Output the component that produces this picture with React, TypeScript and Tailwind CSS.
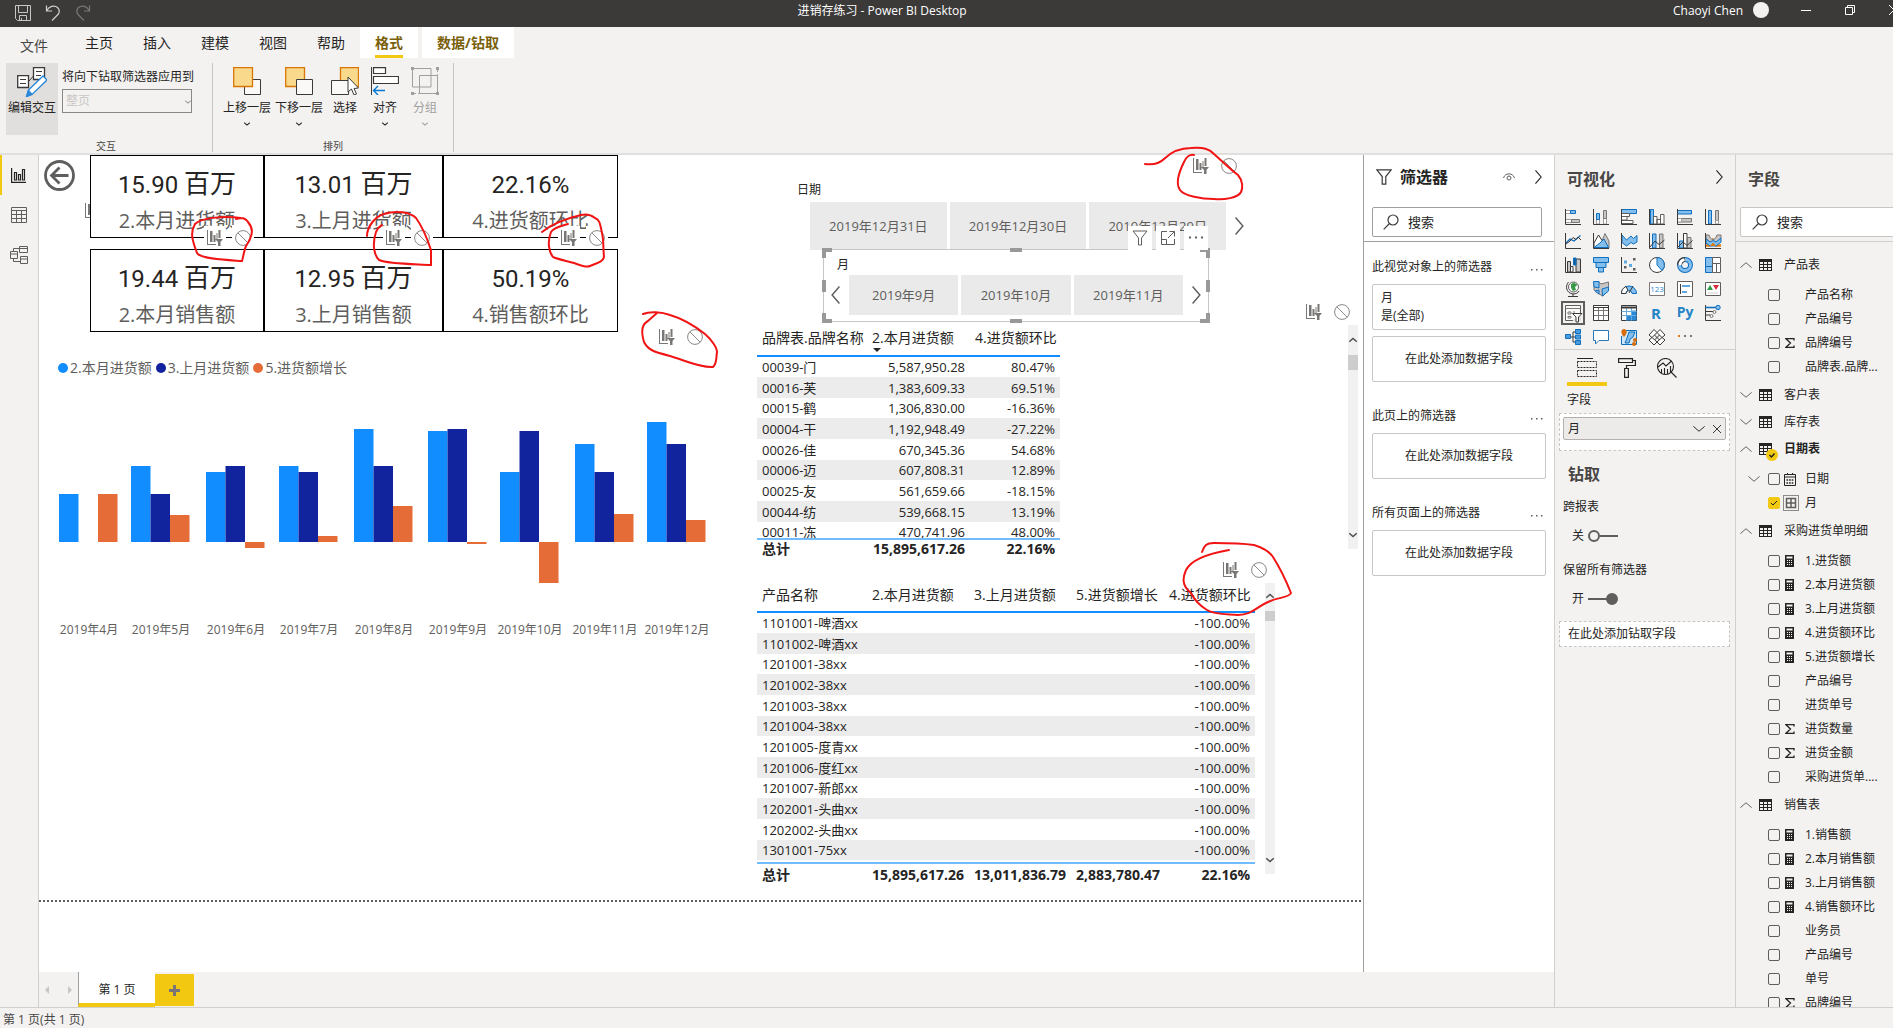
import type { ReactNode } from "react";

const DARK = "#3b3a39";
const GRAY = "#a19f9d";
const BLUE = "#83beec";
const EDGE = "#106ebe";

const menuTabs = ["主页", "插入", "建模", "视图", "帮助"];

const cardRows = [
  [
    { value: "15.90", unit: "百万", label: "2.本月进货额" },
    { value: "13.01", unit: "百万", label: "3.上月进货额" },
    { value: "22.16%", unit: "", label: "4.进货额环比" },
  ],
  [
    { value: "19.44", unit: "百万", label: "2.本月销售额" },
    { value: "12.95", unit: "百万", label: "3.上月销售额" },
    { value: "50.19%", unit: "", label: "4.销售额环比" },
  ],
];

// [label, x, this month, last month, growth]
const months: [string, number, number, number, number][] = [
  ["2019年4月", 20, 48, 0, 48],
  ["2019年5月", 92, 76, 48, 27],
  ["2019年6月", 167, 70, 76, -6],
  ["2019年7月", 240, 76, 70, 6],
  ["2019年8月", 315, 113, 76, 36],
  ["2019年9月", 389, 111, 113, -2],
  ["2019年10月", 461, 70, 111, -41],
  ["2019年11月", 536, 98, 70, 28],
  ["2019年12月", 608, 120, 98, 22],
];

const brandRows = [
  ["00039-门", "5,587,950.28", "80.47%"],
  ["00016-芙", "1,383,609.33", "69.51%"],
  ["00015-鹤", "1,306,830.00", "-16.36%"],
  ["00004-干", "1,192,948.49", "-27.22%"],
  ["00026-佳", "670,345.36", "54.68%"],
  ["00006-迈", "607,808.31", "12.89%"],
  ["00025-友", "561,659.66", "-18.15%"],
  ["00044-纺", "539,668.15", "13.19%"],
  ["00011-冻", "470,741.96", "48.00%"],
];

const productRows = [
  "1101001-啤酒xx",
  "1101002-啤酒xx",
  "1201001-38xx",
  "1201002-38xx",
  "1201003-38xx",
  "1201004-38xx",
  "1201005-度青xx",
  "1201006-度红xx",
  "1201007-新郎xx",
  "1202001-头曲xx",
  "1202002-头曲xx",
  "1301001-75xx",
].map((name) => [name, "", "", "", "-100.00%"]);

type Field = { name: string; kind?: "sum" | "calc" | "date" | "column"; checked?: boolean };

const tables: { name: string; open: boolean; active?: boolean; fields: Field[] }[] = [
  {
    name: "产品表",
    open: true,
    fields: [{ name: "产品名称" }, { name: "产品编号" }, { name: "品牌编号", kind: "sum" }, { name: "品牌表.品牌..." }],
  },
  { name: "客户表", open: false, fields: [] },
  { name: "库存表", open: false, fields: [] },
  {
    name: "日期表",
    open: true,
    active: true,
    fields: [
      { name: "日期", kind: "date" },
      { name: "月", kind: "column", checked: true },
    ],
  },
  {
    name: "采购进货单明细",
    open: true,
    fields: [
      { name: "1.进货额", kind: "calc" },
      { name: "2.本月进货额", kind: "calc" },
      { name: "3.上月进货额", kind: "calc" },
      { name: "4.进货额环比", kind: "calc" },
      { name: "5.进货额增长", kind: "calc" },
      { name: "产品编号" },
      { name: "进货单号" },
      { name: "进货数量", kind: "sum" },
      { name: "进货金额", kind: "sum" },
      { name: "采购进货单...." },
    ],
  },
  {
    name: "销售表",
    open: true,
    fields: [
      { name: "1.销售额", kind: "calc" },
      { name: "2.本月销售额", kind: "calc" },
      { name: "3.上月销售额", kind: "calc" },
      { name: "4.销售额环比", kind: "calc" },
      { name: "业务员" },
      { name: "产品编号" },
      { name: "单号" },
      { name: "品牌编号", kind: "sum" },
    ],
  },
];

type ChevronProps = { dir: "up" | "down" | "left" | "right"; className: string };

function Chevron({ dir, className }: ChevronProps) {
  const paths = {
    up: "M.5 7.5 L8 1 L15.5 7.5",
    down: "M.5 .5 L8 7 L15.5 .5",
    left: "M7.5 .5 L1 8 L7.5 15.5",
    right: "M.5 .5 L7 8 L.5 15.5",
  };
  const flat = dir === "up" || dir === "down";
  return (
    <svg viewBox={flat ? "0 0 16 8" : "0 0 8 16"} className={className} fill="none" stroke="currentColor" strokeWidth="1.3">
      <path d={paths[dir]} />
    </svg>
  );
}

/* ---------- title bar and ribbon ---------- */

function TitleBar() {
  return (
    <header className="flex h-[27px] shrink-0 items-start overflow-hidden bg-[#3b3a39] pt-[3px] text-white">
      <div className="flex flex-1 items-center gap-[14px] pt-[2px] pl-[15px]">
        <button aria-label="保存">
          <svg viewBox="0 0 16 16" className="size-[16px]" fill="none" stroke="#c8c6c4" strokeWidth="1">
            <path d="M.5 .5 H15.5 V15.5 H2.5 L.5 13.5 Z M3.5 .5 V7.5 H12.5 V.5 M4.5 15.5 V10.5 H11.5 V15.5 M6.5 13 V15.5" />
          </svg>
        </button>
        <button aria-label="撤消">
          <svg viewBox="0 0 16 16" className="size-[16px]" fill="none" stroke="#d2d0ce" strokeWidth="1.2">
            <path d="M1.5 .5 V6 H7 M1.5 6 C4 1.5 9 -.5 12.5 2.5 C15 5 14.5 8 12 10.5 L7 15.5" />
          </svg>
        </button>
        <button aria-label="恢复">
          <svg viewBox="0 0 16 16" className="size-[16px]" fill="none" stroke="#797775" strokeWidth="1.2">
            <path d="M14.5 .5 V6 H9 M14.5 6 C12 1.5 7 -.5 3.5 2.5 C1 5 1.5 8 4 10.5 L9 15.5" />
          </svg>
        </button>
      </div>
      <h1 className="mr-[144px] text-[12px] leading-4">进销存练习 - Power BI Desktop</h1>
      <div className="flex flex-1 items-start justify-end">
        <span className="text-[12px] leading-4">Chaoyi Chen</span>
        <span className="-mt-px ml-[10px] size-[16px] rounded-full bg-[#f3f2f1]" />
        <button aria-label="最小化" className="ml-[32px] pt-[2px]">
          <svg viewBox="0 0 10 10" className="size-[10px]" stroke="#fff">
            <path d="M0 5.5 H10" />
          </svg>
        </button>
        <button aria-label="还原" className="ml-[34px] pt-[2px]">
          <svg viewBox="0 0 10 10" className="size-[10px]" fill="none" stroke="#fff">
            <path d="M.5 2.5 H7.5 V9.5 H.5 Z M2.5 2.5 V.5 H9.5 V7.5 H7.5" />
          </svg>
        </button>
        <button aria-label="关闭" className="-mr-[6px] ml-[34px] pt-[2px]">
          <svg viewBox="0 0 10 10" className="size-[10px]" stroke="#fff">
            <path d="M0 0 L10 10 M10 0 L0 10" />
          </svg>
        </button>
      </div>
    </header>
  );
}

type RibbonButtonProps = { label: string; wide?: boolean; menu?: boolean; disabled?: boolean; children: ReactNode };

function RibbonButton({ label, wide, menu = true, disabled, children }: RibbonButtonProps) {
  return (
    <button
      disabled={disabled}
      className={`flex flex-col items-center pt-1 text-[12px] leading-[14px] whitespace-nowrap ${wide ? "w-[52px]" : "w-[40px]"} ${disabled ? "text-[#a19f9d]" : "text-[#252423]"}`}
    >
      <svg viewBox="0 0 28 28" className="mb-[6px] size-[28px]" fill="none">
        {children}
      </svg>
      {label}
      {menu && <Chevron dir="down" className="mt-[7px] h-[4px] w-[6px] stroke-[3]" />}
    </button>
  );
}

function Ribbon() {
  return (
    <section className="shrink-0 border-b-2 border-[#e1dfdd] bg-[#f3f2f1]">
      <nav className="flex h-[31px] items-center text-[14px] leading-5 text-[#252423]">
        <button className="w-[70px] pt-[7px] pl-5 text-left text-[#484644]">文件</button>
        {menuTabs.map((tab) => (
          <button key={tab} className="w-[58px]">
            {tab}
          </button>
        ))}
        <button className="relative h-full w-[58px] bg-white font-bold text-[#7a5f0b]">
          格式
          <span className="absolute bottom-0 left-[15px] h-[3px] w-[28px] bg-[#f2c811]" />
        </button>
        <button className="ml-1 h-full w-[92px] bg-white font-bold text-[#7a5f0b]">数据/钻取</button>
      </nav>

      <div className="flex h-[95px] pt-[5px] pb-px text-[12px]">
        <div className="flex w-[213px] flex-col border-r border-[#c8c6c4] pl-[6px]">
          <div className="flex h-[72px] shrink-0 gap-1">
            <button className="flex w-[52px] flex-col items-center bg-[#e1dfdd] pt-1 leading-[14px] whitespace-nowrap text-[#252423]">
              <svg viewBox="0 0 30 30" className="mb-1 size-[30px]" fill="none" stroke={DARK}>
                <path fill="#fff" d="M.7 8.7 H11.5 V20.5 H.7 Z M16.5 .7 H27.5 V12.5 H16.5 Z" strokeWidth="1.3" />
                <path d="M3 12.5 H9 M3 16.5 H9 M19 4.5 H25 M19 8.5 H24 M12 14 L16.5 9" />
                <path d="M11.5 23 L26 9 L30 13 L15 27.5 L9.5 29.5 Z" fill="#fff" stroke="#2b88d8" strokeWidth="1.4" />
                <path d="M11.5 23 L15.2 27.3 L9.5 29.5 Z" fill="#2b88d8" stroke="#2b88d8" />
              </svg>
              编辑交互
            </button>
            <div className="flex flex-col gap-1 pt-[6px]">
              <label htmlFor="drill" className="leading-4 text-[#252423]">
                将向下钻取筛选器应用到
              </label>
              <div className="relative">
                <select
                  id="drill"
                  disabled
                  className="h-[24px] w-[130px] appearance-none border border-[#8a8886] bg-[#f3f2f1] pl-[3px] leading-4 text-[#c8c6c4] opacity-100"
                >
                  <option>整页</option>
                </select>
                <Chevron dir="down" className="absolute top-[11px] right-[3px] h-[4px] w-[6px] stroke-[3] text-[#a19f9d]" />
              </div>
            </div>
          </div>
          <p className="pt-[5px] pr-[6px] text-center text-[10px] leading-3 text-[#484644]">交互</p>
        </div>

        <div className="flex w-[241px] flex-col border-r border-[#c8c6c4] px-2">
          <div className="flex h-[72px] shrink-0">
            <RibbonButton label="上移一层" wide>
              <path d="M11.5 12.5 H27.5 V27.5 H11.5 Z" stroke={DARK} fill="#faf9f8" />
              <path d="M.7 .7 H19.5 V19.5 H.7 Z" fill="#f9d98c" stroke="#d97706" strokeWidth="1.3" />
            </RibbonButton>
            <RibbonButton label="下移一层" wide>
              <path d="M.7 .7 H19.5 V19.5 H.7 Z" fill="#f9d98c" stroke="#d97706" strokeWidth="1.3" />
              <path d="M11.5 12.5 H27.5 V27.5 H11.5 Z" stroke={DARK} fill="#faf9f8" />
            </RibbonButton>
            <RibbonButton label="选择" menu={false}>
              <path d="M9.5 .7 H27.5 V19.5 H9.5 Z" fill="#f9d98c" stroke="#d97706" strokeWidth="1.3" />
              <path d="M.5 13.5 H17.5 V27.5 H.5 Z" stroke={DARK} fill="#faf9f8" />
              <path d="M17 10 L17 25 L20.5 22 L23 28 L25.5 27 L23 21.5 L27.5 21 Z" fill="#fff" stroke={DARK} />
            </RibbonButton>
            <RibbonButton label="对齐">
              <path d="M.5 0 V28" stroke={DARK} />
              <path d="M2.5 .7 H14.5 V6.5 H2.5 Z M2.5 9.5 H27.5 V16.5 H2.5 Z" stroke={DARK} strokeWidth="1.2" fill="#fff" />
              <path d="M2.5 23.5 H14 M7 19 L2.5 23.5 L7 28" stroke="#0078d4" strokeWidth="1.4" />
            </RibbonButton>
            <RibbonButton label="分组" disabled>
              <path d="M1.5 1.5 H20 V20 H1.5 Z M8.5 8.5 H26.5 V26.5 H8.5 Z" stroke={GRAY} />
              <path d="M0 0 H3 V3 H0 Z M25 0 H28 V3 H25 Z M0 25 H3 V28 H0 Z M25 25 H28 V28 H25 Z" fill={GRAY} />
              <path d="M26.5 3 V8 M3 26.5 H8" stroke={GRAY} strokeDasharray="2 2" />
            </RibbonButton>
          </div>
          <p className="pt-[5px] text-center text-[10px] leading-3 text-[#484644]">排列</p>
        </div>
      </div>
    </section>
  );
}

function ViewRail() {
  return (
    <nav className="flex w-[39px] shrink-0 flex-col border-r border-[#d2d0ce] bg-[#f3f2f1]">
      <button aria-label="报表" className="flex h-[40px] items-center border-l-2 border-[#f2c811] pl-[9px]">
        <svg viewBox="0 0 15 15" className="size-[15px]" fill="none" stroke="#252423" strokeWidth="1.2">
          <path d="M.6 0 V14.4 H15 M3.5 4.5 H5.5 V12 H3.5 Z M7.5 6.5 H9.5 V12 H7.5 Z M11.5 1.5 H13.5 V12 H11.5 Z" />
        </svg>
      </button>
      <button aria-label="数据" className="flex h-[40px] items-center pl-[11px]">
        <svg viewBox="0 0 16 16" className="size-[16px]" fill="none" stroke="#605e5c">
          <path d="M.5 .5 H15.5 V15.5 H.5 Z M.5 3.5 H15.5 M.5 7.5 H15.5 M.5 11.5 H15.5 M5.5 3.5 V15.5 M10.5 3.5 V15.5" />
        </svg>
      </button>
      <button aria-label="模型" className="flex h-[40px] items-center pl-[10px]">
        <svg viewBox="0 0 18 18" className="size-[18px]" fill="none" stroke="#605e5c">
          <path d="M9.5 .5 H17.5 V6.5 H9.5 Z M.5 5.5 H7.5 V12.5 H.5 Z M10.5 10.5 H17.5 V17.5 H10.5 Z M9.5 2.5 H17.5 M.5 8 H7.5 M10.5 13 H17.5 M3.5 5.5 V2.5 H9.5 M3.5 12.5 V15.5 H10.5" />
        </svg>
      </button>
    </nav>
  );
}

/* ---------- report canvas ---------- */

function FilterChartIcon() {
  return (
    <svg viewBox="0 0 16 16" className="size-[16px]" fill="#797775">
      <path d="M0 0 H1 V14 H9 V15 H0 Z M3 1 H5.5 V12 H3 Z M6.5 5 H8.5 V12 H6.5 Z M9.5 3 H10.5 V9 H9.5 Z M11.5 0 H13.5 V8 H11.5 Z M8 9 H16 L13.5 12 V16 H11 V12 Z" />
    </svg>
  );
}

function NoneIcon() {
  return (
    <svg viewBox="0 0 16 16" className="size-[16px]" fill="none" stroke="#8a8886">
      <circle cx="8" cy="8" r="7.4" />
      <path d="M2.8 2.8 L13.2 13.2" />
    </svg>
  );
}

function Interaction({ place, boxed }: { place: string; boxed?: boolean }) {
  const box = boxed ? "flex h-[23px] w-[22px] items-center justify-center bg-white" : "flex h-[23px] w-[22px] items-center justify-center";
  return (
    <div className={`absolute flex gap-[6px] ${place}`}>
      <button aria-label="筛选器" className={box}>
        <FilterChartIcon />
      </button>
      <button aria-label="无" className={box}>
        <NoneIcon />
      </button>
    </div>
  );
}

function Cards() {
  return (
    <div className="relative z-10 flex flex-col gap-[11px]">
      {cardRows.map((row, i) => (
        <div key={i} className="grid h-[83px] grid-cols-[174px_179px_173px] border border-black bg-white">
          {row.map((card, j) => (
            <div key={card.label} className={`flex flex-col items-center pt-[11px] ${j < 2 ? "border-r-2 border-black" : ""}`}>
              <p className="font-['Roboto','Noto_Sans_CJK_SC',sans-serif] text-[24px] leading-[34px] text-[#252423]">
                {card.value} <span className="text-[26px]">{card.unit}</span>
              </p>
              <p className="mt-1 text-[20px] leading-[30px] text-[#605e5c]">{card.label}</p>
            </div>
          ))}
        </div>
      ))}
    </div>
  );
}

function Legend() {
  const items = [
    { name: "2.本月进货额", dot: "bg-[#118dff]" },
    { name: "3.上月进货额", dot: "bg-[#12239e]" },
    { name: "5.进货额增长", dot: "bg-[#e66c37]" },
  ];
  return (
    <ul className="mt-[28px] ml-[19px] flex gap-1 text-[14px] leading-4 text-[#605e5c]">
      {items.map((item) => (
        <li key={item.name} className="flex items-center gap-[2px]">
          <span className={`size-[10px] rounded-full ${item.dot}`} />
          {item.name}
        </li>
      ))}
    </ul>
  );
}

function Bar({ x, value, fill }: { x: number; value: number; fill: string }) {
  return <rect x={x} y={value > 0 ? 122 - value : 122} width="19.5" height={Math.abs(value)} fill={fill} />;
}

function MonthChart() {
  return (
    <svg viewBox="0 0 700 230" className="mt-[44px] h-[230px] w-[700px]">
      {months.map(([label, x, current, previous, growth]) => (
        <g key={label}>
          <Bar x={x} value={current} fill="#118dff" />
          <Bar x={x + 19.5} value={previous} fill="#12239e" />
          <Bar x={x + 39} value={growth} fill="#e66c37" />
          <text x={x + 30} y="214" textAnchor="middle" fontSize="12" fill="#605e5c">
            {label}
          </text>
        </g>
      ))}
    </svg>
  );
}

function Tile({ children }: { children: string }) {
  return <button className="flex-1 bg-[#eaeaea] pt-[2px] text-[13px] text-[#605e5c]">{children}</button>;
}

function Slicers() {
  return (
    <>
      <p className="mt-[28px] ml-[40px] text-[12px] leading-[14px] text-[#252423]">日期</p>
      <div className="mt-[5px] ml-[53px] flex h-[48px] items-center gap-[9px]">
        <div className="flex h-full w-[416px] gap-[3px]">
          <Tile>2019年12月31日</Tile>
          <Tile>2019年12月30日</Tile>
          <Tile>2019年12月29日</Tile>
        </div>
        <button aria-label="下一个">
          <Chevron dir="right" className="h-[18px] w-[9px] text-[#605e5c]" />
        </button>
      </div>

      <div className="relative z-10 -mt-px ml-[66px] flex h-[73px] w-[386px] flex-col border border-[#c8c6c4] bg-white">
        <p className="mt-2 ml-[13px] text-[12px] leading-[14px] text-[#252423]">月</p>
        <div className="mt-[3px] flex h-[40px] items-center justify-center gap-[9px]">
          <button aria-label="上一个">
            <Chevron dir="left" className="h-[18px] w-[9px] text-[#605e5c]" />
          </button>
          <div className="flex h-full w-[334px] gap-[3px]">
            <Tile>2019年9月</Tile>
            <Tile>2019年10月</Tile>
            <Tile>2019年11月</Tile>
          </div>
          <button aria-label="下一个">
            <Chevron dir="right" className="h-[18px] w-[9px] text-[#605e5c]" />
          </button>
        </div>
        <Handles />
        <div className="absolute right-0 bottom-full flex gap-1">
          <HoverButton label="筛选">
            <path d="M1 1 H15 L9.5 8 V15 H6.5 V8 Z" />
          </HoverButton>
          <HoverButton label="焦点模式">
            <path d="M7 1.5 H1.5 V14.5 H14.5 V9 M9.5 1.5 H14.5 V6.5 M14.5 1.5 L8 8 M1.5 9.5 H6.5 V14.5" />
          </HoverButton>
          <HoverButton label="更多选项">
            <path d="M1 7.5 H3 M7 7.5 H9 M13 7.5 H15" strokeWidth="2" />
          </HoverButton>
        </div>
      </div>
    </>
  );
}

function Handles() {
  const places = [
    "-top-[2px] -left-[2px] h-[10px] w-[10px] border-t-4 border-l-4",
    "-top-[2px] -right-[2px] h-[10px] w-[10px] border-t-4 border-r-4",
    "-bottom-[2px] -left-[2px] h-[10px] w-[10px] border-b-4 border-l-4",
    "-bottom-[2px] -right-[2px] h-[10px] w-[10px] border-r-4 border-b-4",
    "-top-[2px] left-[186px] w-[12px] border-t-4",
    "-bottom-[2px] left-[186px] w-[12px] border-b-4",
    "top-[30px] -left-[2px] h-[12px] border-l-4",
    "top-[30px] -right-[2px] h-[12px] border-r-4",
  ];
  return (
    <>
      {places.map((place) => (
        <span key={place} className={`absolute border-[#999] ${place}`} />
      ))}
    </>
  );
}

function HoverButton({ label, children }: { label: string; children: ReactNode }) {
  return (
    <button aria-label={label} className="flex size-[24px] items-center justify-center bg-white">
      <svg viewBox="0 0 16 16" className="size-[16px]" fill="none" stroke="#605e5c">
        {children}
      </svg>
    </button>
  );
}

type GridProps = { widths: number[]; headers: string[]; rows: string[][]; totals: string[]; tall?: boolean; sorted?: number };

function DataGrid({ widths, headers, rows, totals, tall, sorted }: GridProps) {
  const columns = (
    <colgroup>
      {widths.map((width, i) => (
        <col key={i} style={{ width }} />
      ))}
    </colgroup>
  );
  const total = { width: widths.reduce((a, b) => a + b, 0) };
  return (
    <div>
      <div className={`overflow-hidden ${tall ? "h-[283px]" : "h-[213px]"}`}>
        <table className="table-fixed border-collapse text-[13px] text-[#252423]" style={total}>
          {columns}
          <thead>
            <tr className={tall ? "h-[33px]" : "h-[31px]"}>
              {headers.map((header, i) => (
                <th
                  key={header}
                  className={`relative border-b-2 border-[#118dff] px-[5px] text-left text-[14px] leading-5 font-normal whitespace-nowrap ${tall ? "pb-0" : "pb-1"}`}
                >
                  {header}
                  {sorted === i && (
                    <span className="absolute bottom-[3px] left-[6px] border-x-4 border-t-4 border-x-transparent border-t-[#252423]" />
                  )}
                </th>
              ))}
            </tr>
          </thead>
          <tbody>
            {rows.map((row) => (
              <tr key={row[0]} className="h-[21px] nth-[3n]:h-[20px] even:bg-[#ececec]">
                {row.map((cell, i) => (
                  <td key={i} className={`px-[5px] py-0 leading-5 whitespace-nowrap ${i ? "text-right" : ""}`}>
                    {cell}
                  </td>
                ))}
              </tr>
            ))}
          </tbody>
        </table>
      </div>
      <table className="table-fixed border-collapse border-t-2 border-[#71bbff] text-[#252423]" style={total}>
        {columns}
        <tfoot>
          <tr className={`text-[14px] font-bold ${tall ? "h-[22px]" : "h-[18px]"}`}>
            {totals.map((cell, i) => (
              <td key={i} className={`px-[5px] py-0 leading-[18px] ${i ? "text-right" : ""}`}>
                {cell}
              </td>
            ))}
          </tr>
        </tfoot>
      </table>
    </div>
  );
}

function ScrollBar({ className, thumb }: { className: string; thumb: string }) {
  return (
    <div className={`flex w-[10px] flex-col items-center bg-[#f1f1f1] text-[#505050] ${className}`}>
      <Chevron dir="up" className="h-[6px] w-[8px] stroke-[3]" />
      <span className={`w-full bg-[#cdcdcd] ${thumb}`} />
      <Chevron dir="down" className="mt-auto h-[6px] w-[8px] stroke-[3]" />
    </div>
  );
}

// Pen marks drawn over the report.
function Ink() {
  return (
    <svg className="pointer-events-none absolute top-0 left-0 z-30 h-[500px] w-[1300px] overflow-visible" viewBox="39 155 1300 500" fill="none" stroke="#f11414" strokeWidth="2" strokeLinecap="round">
      <path d="M236 219 L241 218 C226 216 202 217 195 224 C190 232 192 240 197 253 C200 259 228 260 242 261 C244 254 244 250 246 246 C254 234 253 228 248 222 C246 219 243 218 241 218" />
      <path d="M367 236 C367 226 376 216 384 214 C396 210 410 212 416 218 C422 226 427 238 431 250 V265 C412 264 388 264 379 260 C374 255 372 244 376 232 C377 229 379 227 382 225" />
      <path d="M568 224 C562 226 554 227 551 232 C547 242 549 252 553 257 C560 260 568 261 574 263 C580 265 586 268 590 266 C597 263 603 262 604 257 C603 248 604 242 602 233 C600 224 600 220 595 218 C590 214 585 214 581 215 C568 218 552 224 542 232" />
      <path d="M643 314 C650 311 662 312 670 315 C684 319 696 327 705 334 C712 340 717 348 717 352 C716 358 717 364 713 367 C700 368 684 360 670 356 C654 352 648 350 644 342 C641 332 642 324 648 321 L657 313" />
      <path d="M1145 164 C1153 165 1160 163 1164 159 C1172 151 1180 148 1191 148 C1204 147 1209 149 1214 154 C1223 162 1231 170 1238 175 C1243 181 1243 188 1241 192 C1238 198 1224 200 1214 199 C1202 199 1184 196 1180 190 C1175 183 1179 172 1184 162 C1186 157 1190 154 1194 155" />
      <path d="M1202 552 C1204 546 1206 543 1214 543 C1228 543 1240 543 1254 545 C1264 548 1269 551 1273 557 C1280 568 1287 583 1291 593 C1289 598 1278 597 1268 602 C1256 607 1252 615 1238 615 C1228 614 1214 615 1207 610 C1199 605 1194 599 1191 593 C1181 585 1183 577 1186 570 C1192 558 1212 553 1229 550" />
    </svg>
  );
}

function Canvas() {
  return (
    <main className="relative min-w-0 flex-1 overflow-x-clip bg-white">
      <div className="flex h-[745px]">
        <div className="w-[718px] shrink-0">
          <div className="flex gap-[15px] pl-[5px]">
            <button aria-label="返回" className="mt-[5px] size-[31px]">
              <svg viewBox="0 0 31 31" fill="none" stroke="#605e5c" strokeWidth="2.8">
                <circle cx="15.5" cy="15.5" r="14" />
                <path d="M24.5 15.5 H7.5 M15.5 7.5 L7.5 15.5 L15.5 23.5" />
              </svg>
            </button>
            <Cards />
          </div>
          <Legend />
          <MonthChart />
        </div>
        <div className="shrink-0">
          <Slicers />
          <div className="mt-[3px] flex items-start justify-between">
            <DataGrid
              widths={[110, 103, 90]}
              headers={["品牌表.品牌名称", "2.本月进货额", "4.进货额环比"]}
              rows={brandRows}
              totals={["总计", "15,895,617.26", "22.16%"]}
              sorted={1}
            />
            <ScrollBar className="ml-[288px] h-[224px] pt-3 pb-[11px]" thumb="mt-3 h-[15px]" />
          </div>
          <div className="mt-[21px] flex items-start gap-[10px]">
            <DataGrid
              widths={[110, 102, 102, 93, 91]}
              headers={["产品名称", "2.本月进货额", "3.上月进货额", "5.进货额增长", "4.进货额环比"]}
              rows={productRows}
              totals={["总计", "15,895,617.26", "13,011,836.79", "2,883,780.47", "22.16%"]}
              tall
            />
            <ScrollBar className="mt-1 h-[291px] pt-[10px] pb-[11px]" thumb="mt-3 h-[10px]" />
          </div>
        </div>
      </div>
      <div className="h-[2px] bg-[repeating-linear-gradient(90deg,#605e5c_0_2px,transparent_2px_4px)]" />

      <Interaction place="top-[44px] left-[43px]" />
      <Interaction place="top-[71px] left-[165px] z-20" boxed />
      <Interaction place="top-[71px] left-[344px] z-20" boxed />
      <Interaction place="top-[71px] left-[519px] z-20" boxed />
      <Interaction place="top-[170px] left-[617px]" />
      <Interaction place="-top-px left-[1151px]" />
      <Interaction place="top-[145px] left-[1264px]" />
      <Interaction place="top-[403px] left-[1181px]" />
      <Ink />
    </main>
  );
}

/* ---------- panes ---------- */

function SearchBox({ id, className }: { id: string; className: string }) {
  return (
    <label htmlFor={id} className={`flex h-[30px] items-center rounded-[2px] border bg-white ${className}`}>
      <svg viewBox="0 0 16 16" className="size-[16px] shrink-0" fill="none" stroke={DARK} strokeWidth="1.2">
        <circle cx="10" cy="6" r="5" />
        <path d="M6.5 9.5 L.7 15.3" />
      </svg>
      <input id={id} placeholder="搜索" className="ml-[9px] w-full min-w-0 text-[13px] leading-4 outline-none placeholder:text-[#252423]" />
    </label>
  );
}

function FilterSection({ title, children }: { title: string; children?: ReactNode }) {
  return (
    <section className="mb-[26px] px-2">
      <div className="mb-[9px] flex items-center justify-between pr-[3px] leading-4">
        <h3>{title}</h3>
        <button aria-label="更多">
          <svg viewBox="0 0 12 2" className="mt-[5px] h-[2px] w-[12px]" fill="#605e5c">
            <path d="M0 0 H1.5 V1.5 H0 Z M5 0 H6.5 V1.5 H5 Z M10 0 H11.5 V1.5 H10 Z" />
          </svg>
        </button>
      </div>
      {children}
      <div className="flex h-[46px] items-center justify-center rounded-[2px] border border-[#c8c6c4]">在此处添加数据字段</div>
    </section>
  );
}

function FilterPane() {
  return (
    <aside className="w-[191px] shrink-0 border-l border-[#a19f9d] bg-white text-[12px] text-[#252423]">
      <header className="flex h-[44px] items-center pr-[12px] pl-[12px]">
        <svg viewBox="0 0 16 16" className="size-[16px]" fill="none" stroke={DARK} strokeWidth="1.2">
          <path d="M.8 .8 H15.2 L9.8 7.5 V15.2 H6.2 V7.5 Z" />
        </svg>
        <h2 className="ml-2 text-[16px] leading-6 font-bold">筛选器</h2>
        <svg viewBox="0 0 12 8" className="ml-auto h-[8px] w-[12px]" fill="none" stroke="#605e5c">
          <path d="M.5 5 C2 -.5 10 -.5 11.5 5" />
          <circle cx="6" cy="5" r="2" />
        </svg>
        <button aria-label="折叠" className="ml-5">
          <Chevron dir="right" className="h-[14px] w-[7px]" />
        </button>
      </header>
      <div className="border-b border-[#a19f9d] px-2 pt-2 pb-1">
        <SearchBox id="filter-search" className="w-[170px] border-[#a19f9d] pl-[10px]" />
      </div>
      <div className="pt-[17px]">
        <FilterSection title="此视觉对象上的筛选器">
          <div className="mb-[6px] h-[46px] rounded-[2px] border border-[#c8c6c4] pt-1 pl-2 leading-[18px]">
            <p>月</p>
            <p>是(全部)</p>
          </div>
        </FilterSection>
        <FilterSection title="此页上的筛选器" />
        <FilterSection title="所有页面上的筛选器" />
      </div>
    </aside>
  );
}

const axis = <path d="M.5 0 V15.5 H16" stroke={DARK} />;

const vizIcons: { name: string; art: ReactNode }[] = [
  { name: "堆积条形图", art: <><path d="M.5 1.5 H5.5 V4.5 H.5 Z M.5 10.5 H8 V13.5 H.5 Z" stroke={GRAY} fill="#fff" /><path d="M5.5 1.5 H10.5 V4.5 H5.5 Z" fill={BLUE} stroke={EDGE} /><path d="M6.5 10.5 H14.5 V13.5 H6.5 Z" fill="#c8c6c4" stroke="#797775" />{axis}</> },
  { name: "堆积柱形图", art: <><path d="M3.5 10 H6.5 V15 H3.5 Z M10.5 8 H13.5 V15 H10.5 Z" fill="#fff" stroke={GRAY} /><path d="M3.5 4.5 H6.5 V10.5 H3.5 Z" fill={BLUE} stroke={EDGE} /><path d="M10.5 1.5 H13.5 V9.5 H10.5 Z" fill="#c8c6c4" stroke="#797775" />{axis}</> },
  { name: "簇状条形图", art: <><path d="M.5 .5 H15.5 V4.5 H.5 Z" fill={BLUE} stroke={EDGE} /><path d="M.5 4.5 H8.5 V7.5 H.5 Z M.5 7.5 H6 V11 H.5 Z M.5 11.5 H12 V14.5 H.5 Z" fill="#fff" stroke="#605e5c" />{axis}</> },
  { name: "簇状柱形图", art: <><path d="M1.5 .5 H4.5 V15 H1.5 Z" fill={BLUE} stroke={EDGE} /><path d="M4.5 7.5 H8 V15 H4.5 Z M8 10.5 H11.5 V15 H8 Z M11.5 5.5 H15 V15 H11.5 Z" fill="#fff" stroke="#605e5c" />{axis}</> },
  { name: "百分比堆积条形图", art: <><path d="M.5 1.5 H14.5 V5 H.5 Z" fill={BLUE} stroke={EDGE} /><path d="M.5 9.5 H14.5 V13 H.5 Z" fill="#c8c6c4" stroke="#797775" /><path d="M.5 9.5 H4.5 V13 H.5 Z" fill="#fff" stroke={GRAY} />{axis}</> },
  { name: "百分比堆积柱形图", art: <><path d="M3.5 1.5 H6.5 V15 H3.5 Z" fill={BLUE} stroke={EDGE} /><path d="M10.5 1.5 H13.5 V15 H10.5 Z" fill="#c8c6c4" stroke="#797775" /><path d="M10.5 11.5 H13.5 V15 H10.5 Z" fill="#fff" stroke={GRAY} />{axis}</> },
  { name: "折线图", art: <><path d="M1 10 L5 6 L9 8 L15.5 2.5" stroke={EDGE} strokeWidth="1.3" /><path d="M1 11 L5 8 L8 4.5 L11 6.5 L13 4 L16 7" stroke={DARK} />{axis}</> },
  { name: "分区图", art: <><path d="M6 15 L12 .5 L16 8 V15 Z" fill="#c8c6c4" stroke="#797775" /><path d="M1 10 L5.5 2 L10 9 L5 15 H1 Z" fill="#fff" stroke={DARK} /><path d="M1 14.5 L7 10 L11 6 L15.5 14.5 Z" fill={BLUE} stroke={EDGE} />{axis}</> },
  { name: "堆积面积图", art: <><path d="M1 2 L5.5 7 L10 3 L12.5 5.5 L16 2.5 V9 L12.5 11 L10 9.5 L5.5 13 L1 9.5 Z" fill={BLUE} stroke={EDGE} />{axis}</> },
  { name: "折线和堆积柱形图", art: <><path d="M3.5 1 H7 V15 H3.5 Z" fill={BLUE} stroke={EDGE} /><path d="M10.5 1 H14 V15 H10.5 Z" fill="#c8c6c4" stroke="#797775" /><path d="M1 14 L6 8 L10 11.5 L15.5 7" stroke={DARK} />{axis}</> },
  { name: "折线和簇状柱形图", art: <><path d="M2.5 8 H6.5 V15 H2.5 Z" fill={BLUE} stroke={EDGE} /><path d="M6.5 .5 H10 V15 H6.5 Z" fill="#fff" stroke={DARK} /><path d="M10.5 4.5 H14 V15 H10.5 Z" fill="#c8c6c4" stroke="#797775" /><path d="M1 14 L6 9 L10 12.5 L15.5 7.5" stroke={DARK} />{axis}</> },
  { name: "功能区图表", art: <><path d="M1 12.5 H5 L8 7 L11 12.5 H16" stroke="#e07c12" strokeWidth="2.4" /><path d="M1 2 H4 C6 8 10 8 12 2 H16 V5 C11 12 6 12 1 5 Z" fill="#c8c6c4" stroke="#797775" /><path d="M1 6 L5 9 L8 7.5 L11 9 L16 5 V9 L11 13 H5 L1 10 Z" fill={BLUE} stroke={EDGE} /><path d="M6 12.5 L8 10 L10 12.5 Z M1.5 12.5 H4 M12.5 12.5 H15.5" fill="#e07c12" stroke="#e07c12" />{axis}</> },
  { name: "瀑布图", art: <><path d="M2.5 4.5 H5.5 V15 H2.5 Z M11 2 H15.5 V15 H11 Z" fill="#c8c6c4" stroke={DARK} /><path d="M5.5 9.5 H8 V15 H5.5 Z" fill="#fff" stroke={DARK} /><path d="M8.5 1 H11 V8 H8.5 Z" fill="#0f5fa8" stroke={EDGE} />{axis}</> },
  { name: "漏斗图", art: <path d="M.5 .5 H15.5 V5.5 H.5 Z M3 5.5 H13 V10.5 H3 Z M5.5 10.5 H10.5 V15 H5.5 Z" fill={BLUE} stroke={EDGE} /> },
  { name: "散点图", art: <><path d="M3 9 H5.5 V11.5 H3 Z M12 11 H14.5 V13.5 H12 Z M12 1 H14.5 V3.5 H12 Z" fill="#605e5c" /><path d="M3 3.5 H6 V6.5 H3 Z M8 7 H11 V10 H8 Z" fill="#5ea9e0" />{axis}</> },
  { name: "饼图", art: <><circle cx="8" cy="8" r="7.5" fill="#fff" stroke={DARK} /><path d="M8 .5 A7.5 7.5 0 0 1 13 13.5 L8 8 Z" fill={BLUE} stroke={EDGE} /></> },
  { name: "环形图", art: <><circle cx="8" cy="8" r="5.5" stroke={EDGE} strokeWidth="5" /><circle cx="8" cy="8" r="5.5" stroke={BLUE} strokeWidth="3" /><path d="M2.5 8 A5.5 5.5 0 0 1 8 2.5" stroke={DARK} strokeWidth="5" /><path d="M3 8 A5.5 5.5 0 0 1 7.5 2.6" stroke="#fff" strokeWidth="3" /></> },
  { name: "树状图", art: <><path d="M.5 .5 H7.5 V15.5 H.5 Z" fill={BLUE} stroke={EDGE} /><path d="M.5 9.5 H7.5" stroke={EDGE} /><path d="M7.5 .5 H15.5 V6.5 H7.5 Z M7.5 6.5 H11.5 V15.5 H7.5 Z M11.5 6.5 H15.5 V15.5 H11.5 Z" fill="#fff" stroke="#605e5c" /></> },
  { name: "地图", art: <><circle cx="8.5" cy="6" r="5" fill="#fff" stroke="#605e5c" /><path d="M6 3 L9 1.5 L12.5 4 L10 6 L11 9 L8 10 L6 7 Z" fill="#3a9a4a" /><path d="M3.5 1 C0 5 1 12 8 13 C11 13 13 12 14 10 M8 13 V15 M3 15.5 H13" stroke={DARK} /></> },
  { name: "着色地图", art: <><path d="M1 1 H6 L8 3 L15.5 1 V9 L10 15 L6 13 L1 9 Z" fill="#c8c6c4" stroke="#797775" /><path d="M.5 .5 H6 V7 L1 6 Z M9 8 L15.5 6 V10 L9.5 15 Z M2 10 L6 9 V13 Z" fill={BLUE} stroke={EDGE} /></> },
  { name: "仪表", art: <><path d="M.5 12.5 A7.5 7.5 0 0 1 15.5 12.5 H11 A3 3 0 0 0 5 12.5 Z" fill={BLUE} stroke={EDGE} /><path d="M.5 12.5 A7.5 7.5 0 0 1 5 5.5 L7 9.5 A3 3 0 0 0 5 12.5 Z" fill="#fff" stroke={DARK} /><path d="M8 12 L12 5" stroke={DARK} /></> },
  { name: "卡片图", art: <><path d="M.5 1.5 H15.5 V14.5 H.5 Z" fill="#fff" stroke="#797775" /><text x="8" y="11" fontSize="8" textAnchor="middle" fill="#2b88d8">123</text></> },
  { name: "多行卡", art: <><path d="M.5 .5 H15.5 V15.5 H.5 Z" fill="#fff" stroke="#605e5c" /><path d="M3.5 3 V13" stroke={DARK} /><path d="M5 5 H13 M5 11 H10" stroke="#2b88d8" strokeWidth="1.6" /></> },
  { name: "KPI", art: <><path d="M.5 1.5 H15.5 V14.5 H.5 Z" fill="#fff" stroke="#605e5c" /><path d="M2 9 L5 4 L8 9 Z" fill="#2f9e44" /><path d="M8 4 H14 L11 9 Z" fill="#d92b3a" /><path d="M3 12 H13" stroke="#d2d0ce" /></> },
  { name: "切片器", art: <><path d="M15.5 8 V.5 H.5 V15.5 H8" fill="#faf9f8" stroke="#605e5c" /><path d="M.5 3.5 H15.5 M3 7 H6 V9 H3 Z M3 11.5 H6 V13 H3 Z M8 7 H10" stroke="#797775" /><path d="M7.5 8.5 H17 L13.5 12 V17 H11 V12 Z" fill="#fff" stroke={DARK} /></> },
  { name: "表", art: <><path d="M.5 .5 H15.5 V15.5 H.5 Z M.5 5.5 H15.5 M.5 10.5 H15.5 M5.5 3 V15.5 M10.5 3 V15.5" fill="#fff" stroke="#797775" /><path d="M.5 2.5 H15.5 V.5 H.5 V15.5 H15.5 V.5" stroke={DARK} /></> },
  { name: "矩阵", art: <><path d="M.5 .5 H15.5 V15.5 H.5 Z" fill="#fff" stroke={DARK} /><path d="M5.5 10.5 H15.5 V15.5 H5.5 Z M10.5 5.5 H15.5 V15.5 H10.5 Z" fill="#2b88d8" /><path d="M5.5 3 V15.5 M10.5 3 V15.5 M.5 6.5 H15.5 M.5 10.5 H15.5" stroke="#6aa9dc" /><path d="M.5 2.5 H15.5" stroke={DARK} strokeWidth="2" /></> },
  { name: "R 脚本", art: <text x="7" y="13.5" fontSize="15" fontWeight="bold" textAnchor="middle" fill="#2484c6">R</text> },
  { name: "Python", art: <text x="8" y="12" fontSize="14" fontWeight="bold" textAnchor="middle" fill="#2484c6">Py</text> },
  { name: "关键影响者", art: <><path d="M.5 0 V15.5 H16 M.5 6.5 H8 M.5 10 H5" stroke={DARK} /><path d="M.5 2.5 H11" stroke={EDGE} strokeWidth="1.6" /><circle cx="13" cy="2.5" r="2.2" fill={BLUE} stroke={EDGE} /><circle cx="9.5" cy="7" r="1.5" stroke="#797775" /><circle cx="6.5" cy="11" r="1.5" stroke="#797775" /></> },
  { name: "分解树", art: <><path d="M6 8 H10 M8 3 V13 M8 3 H10 M8 13 H10" stroke={DARK} /><path d="M.5 5.5 H5.5 V9.5 H.5 Z M10.5 .5 H15.5 V4.5 H10.5 Z M10.5 6 H15.5 V10 H10.5 Z M10.5 11.5 H15.5 V15.5 H10.5 Z" fill="#4a9bdc" stroke={EDGE} /></> },
  { name: "问答", art: <path d="M.5 1.5 H15.5 V11.5 H6 L2.5 15 V11.5 H.5 Z" fill="#fff" stroke="#2b78b8" /> },
  { name: "ArcGIS 地图", art: <><path d="M3 1.5 H15.5 V15.5 H.5 V7" fill="#cfe6f7" stroke={EDGE} /><path d="M8 3 H14 L12 8 L9 10 L8 14 H4 L6 9 Z" fill={BLUE} stroke={EDGE} /><path d="M3 8 C-1 4 0 0 3 0 C6 0 7 4 3 8 Z" fill="#d96b0b" /><circle cx="14" cy="11" r="2" fill="#d96b0b" /><circle cx="13" cy="15" r="2" fill="#d96b0b" /></> },
  { name: "Power Apps", art: <path d="M5 .5 L8 3.5 L11 .5 L16 6 L13 8.5 L16 11 L11 16 L8 13 L5 16 L0 11 L3 8.5 L0 6 Z M8 3.5 L3 8.5 L8 13 L13 8.5 Z M5.5 6 L10.5 11 M10.5 6 L5.5 11" fill="#fff" stroke={DARK} /> },
  { name: "更多", art: <><path d="M1 7 H3" stroke="#e07c12" strokeWidth="2" /><path d="M7 7 H9 M13 7 H15" stroke="#797775" strokeWidth="2" /></> },
];

type ToggleProps = { id: string; title: string; state: string; on?: boolean };

function Toggle({ id, title, state, on }: ToggleProps) {
  return (
    <div className="mb-[18px] pl-2">
      <h3 className="leading-4">{title}</h3>
      <label htmlFor={id} className="mt-[13px] flex items-center gap-1 pl-[9px] leading-4">
        {state}
        <input id={id} type="checkbox" role="switch" defaultChecked={on} className="sr-only" />
        <svg viewBox="0 0 30 14" className="h-[14px] w-[30px]" fill="none" stroke="#605e5c" strokeWidth="2">
          <path d={on ? "M0 7 H20" : "M12 7 H30"} />
          <circle cx={on ? 24 : 6} cy="7" r="5" fill={on ? "#605e5c" : "none"} />
        </svg>
      </label>
    </div>
  );
}

function VisualizationPane() {
  return (
    <aside className="w-[181px] shrink-0 border-l border-[#d2d0ce] text-[12px] text-[#252423]">
      <header className="flex h-[48px] items-center justify-between pr-[12px] pl-[12px]">
        <h2 className="text-[16px] leading-6 font-bold text-[#484644]">可视化</h2>
        <button aria-label="折叠" className="-mt-1">
          <Chevron dir="right" className="h-[14px] w-[7px]" />
        </button>
      </header>
      <div className="mt-[6px] grid grid-cols-[repeat(6,16px)] gap-x-3 gap-y-2 border-b border-[#d2d0ce] pb-1 pl-[10px]">
        {vizIcons.map((icon) => (
          <button
            key={icon.name}
            aria-label={icon.name}
            className={icon.name === "切片器" ? "size-[16px] bg-[#e1dfdd] outline-2 outline-offset-2 outline-[#605e5c]" : "size-[16px]"}
          >
            <svg viewBox="0 0 16 16" className="size-[16px] overflow-visible" fill="none">
              {icon.art}
            </svg>
          </button>
        ))}
      </div>

      <div className="flex h-[36px] items-start pt-2 pl-[12px]">
        <button aria-label="字段" className="flex h-[28px] w-[40px] justify-center border-b-4 border-[#f2c811]">
          <svg viewBox="0 0 20 20" className="size-[20px]" fill="none" stroke="#252423">
            <path d="M0 .5 H16" />
            <path d="M.5 3.5 H19.5 V9.5 H.5 Z M.5 12.5 H19.5 V18.5 H.5 Z" strokeDasharray="2 1" />
          </svg>
        </button>
        <button aria-label="格式" className="ml-[11px]">
          <svg viewBox="0 0 18 20" className="h-[20px] w-[18px]" fill="none" stroke="#252423" strokeWidth="1.2">
            <path d="M.6 .6 H14.5 V4.5 H.6 Z M14.5 2.5 H17.4 V7.5 H8.5 V10 M6.6 10.5 H10.4 V19.4 H6.6 Z" />
          </svg>
        </button>
        <button aria-label="分析" className="ml-[21px]">
          <svg viewBox="0 0 20 20" className="size-[20px]" fill="none" stroke="#252423" strokeWidth="1.1">
            <circle cx="8.5" cy="8.5" r="8" />
            <path d="M14 14 L19.5 19.5 M1 9 L6 5 L9 8 L14.5 3 M4.5 15 V11 M7.5 16 V10 M10.5 16 V11 M13.5 14 V8" />
          </svg>
        </button>
      </div>

      <h3 className="mt-[6px] pl-[12px] leading-4">字段</h3>
      <div className="mx-[4px] mt-[5px] h-[38px] w-[171px] border border-dashed border-[#c8c6c4] bg-white p-[3px]">
        <div className="flex h-[23px] items-center rounded-[2px] border border-[#b3b0ad] bg-[#edebe9] pr-1 pl-1">
          月
          <button aria-label="选项" className="ml-auto">
            <Chevron dir="down" className="h-[6px] w-[12px]" />
          </button>
          <button aria-label="移除" className="ml-2">
            <svg viewBox="0 0 8 8" className="size-[8px]" stroke={DARK}>
              <path d="M0 0 L8 8 M8 0 L0 8" />
            </svg>
          </button>
        </div>
      </div>
      <h2 className="mt-[11px] mb-[13px] pl-[13px] text-[16px] leading-6 font-bold text-[#484644]">钻取</h2>
      <Toggle id="cross-report" title="跨报表" state="关" />
      <Toggle id="keep-filters" title="保留所有筛选器" state="开" on />
      <div className="-mt-1 ml-[4px] flex h-[26px] w-[171px] items-center border border-dashed border-[#c8c6c4] bg-white pl-2">
        在此处添加钻取字段
      </div>
    </aside>
  );
}

function TableIcon() {
  return (
    <svg viewBox="0 0 13 12" className="h-[12px] w-[13px]" fill="#252423">
      <path fillRule="evenodd" d="M0 0 H13 V12 H0 Z M1 3 V5 H4 V3 Z M5 3 V5 H8 V3 Z M9 3 V5 H12 V3 Z M1 6 V8 H4 V6 Z M5 6 V8 H8 V6 Z M9 6 V8 H12 V6 Z M1 9 V11 H4 V9 Z M5 9 V11 H8 V9 Z M9 9 V11 H12 V9 Z" />
    </svg>
  );
}

function FieldIcon({ kind }: { kind?: Field["kind"] }) {
  if (kind === "calc") {
    return (
      <svg viewBox="0 0 10 12" className="h-[12px] w-[10px]" fill="#252423">
        <path fillRule="evenodd" d="M0 0 H9 V12 H0 Z M1.5 1.5 V3.5 H7.5 V1.5 Z M2 5 V6 H3 V5 Z M4 5 V6 H5 V5 Z M6 5 V6 H7 V5 Z M2 7 V8 H3 V7 Z M4 7 V8 H5 V7 Z M6 7 V8 H7 V7 Z M2 9 V10 H3 V9 Z M4 9 V10 H5 V9 Z M6 9 V10 H7 V9 Z" />
      </svg>
    );
  }
  if (kind === "sum") {
    return (
      <svg viewBox="0 0 10 10" className="size-[10px]" fill="none" stroke="#252423" strokeWidth="1.3">
        <path d="M9 2.5 V.7 H1 L5.5 5 L1 9.3 H9 V7.5" />
      </svg>
    );
  }
  if (kind === "date") {
    return (
      <svg viewBox="0 0 12 13" className="-ml-px h-[13px] w-[12px]" fill="none" stroke="#252423">
        <path d="M.5 1.5 H11.5 V12.5 H.5 Z M.5 4 H11.5 M3.5 0 V2 M8.5 0 V2" />
        <path d="M2.5 7 H10 M2.5 10 H10" strokeWidth="1.6" strokeDasharray="1.6 1" />
      </svg>
    );
  }
  if (kind === "column") {
    return (
      <svg viewBox="0 0 16 16" className="-ml-[2px] size-[16px] shrink-0" fill="none" stroke="#252423">
        <path d="M.5 .5 H15.5 V15.5 H.5 Z" strokeDasharray="1 1" />
        <path d="M3.5 3.5 H12.5 V12.5 H3.5 Z M8 3.5 V12.5 M3.5 8 H12.5" stroke="#605e5c" strokeWidth="1.5" />
      </svg>
    );
  }
  return null;
}

function FieldsPane() {
  return (
    <aside className="w-[158px] shrink-0 overflow-hidden border-l border-[#d2d0ce] text-[12px] text-[#252423]">
      <h2 className="pt-[12px] pl-[12px] text-[16px] leading-6 font-bold text-[#484644]">字段</h2>
      <div className="border-b border-[#d2d0ce] pt-4 pb-1 pl-1">
        <SearchBox id="field-search" className="w-[170px] border-[#c8c6c4] pl-[11px]" />
      </div>
      <div className="pt-[9px]">
        {tables.map((table) => (
          <section key={table.name}>
            <button className="flex h-[27px] w-full items-center pl-1">
              <Chevron dir={table.open ? "up" : "down"} className="h-[6px] w-[12px] text-[#605e5c]" />
              <span className="relative ml-[7px]">
                <TableIcon />
                {table.active && (
                  <svg viewBox="0 0 12 12" className="absolute top-[6px] left-[7px] size-[12px]">
                    <circle cx="6" cy="6" r="6" fill="#f2c811" />
                    <path d="M3.5 6 L5.5 8 L8.5 4.5" fill="none" stroke="#252423" strokeWidth="1.5" />
                  </svg>
                )}
              </span>
              <span className={`ml-3 leading-4 ${table.active ? "font-bold" : ""}`}>{table.name}</span>
            </button>
            {table.fields.length > 0 && (
              <ul className="pt-[5px] pb-[2px]">
                {table.fields.map((field) => (
                  <li key={field.name}>
                    <label className="flex h-[24px] items-center leading-4 whitespace-nowrap">
                      <span className="flex w-[32px] shrink-0 pl-[12px]">
                        {field.kind === "date" && <Chevron dir="down" className="h-[6px] w-[12px] text-[#605e5c]" />}
                      </span>
                      <span className="relative flex shrink-0">
                        <input
                          type="checkbox"
                          defaultChecked={field.checked}
                          className="size-[12px] appearance-none rounded-[2px] border border-[#605e5c] checked:border-[#f2c811] checked:bg-[#f2c811]"
                        />
                        {field.checked && (
                          <svg viewBox="0 0 12 12" className="absolute inset-0 size-[12px]" fill="none" stroke="#252423">
                            <path d="M3 6 L5 8 L9 4" />
                          </svg>
                        )}
                      </span>
                      <span className="flex w-[25px] shrink-0 items-center justify-start pl-[5px]">
                        <FieldIcon kind={field.kind} />
                      </span>
                      {field.name}
                    </label>
                  </li>
                ))}
              </ul>
            )}
          </section>
        ))}
      </div>
    </aside>
  );
}

function PageTabs() {
  return (
    <footer className="flex h-[35px] shrink-0 bg-[#f3f2f1]">
      <div className="flex w-[39px] items-center justify-between pr-[6px] pl-[6px]">
        <button aria-label="上一页" className="border-y-4 border-r-4 border-y-transparent border-r-[#c8c6c4]" />
        <button aria-label="下一页" className="border-y-4 border-l-4 border-y-transparent border-l-[#c8c6c4]" />
      </div>
      <button className="w-[77px] border-b-4 border-l border-b-[#f2c811] border-l-[#a19f9d] bg-white pt-[5px] text-[12px] text-[#252423]">
        第 1 页
      </button>
      <button aria-label="新建页" className="mt-[2px] mb-px flex w-[39px] items-center justify-center bg-[#f2c811]">
        <svg viewBox="0 0 11 11" className="size-[11px]" fill="#7a7574">
          <path d="M4 0 H7 V4 H11 V7 H7 V11 H4 V7 H0 V4 H4 Z" />
        </svg>
      </button>
    </footer>
  );
}

export default function App() {
  return (
    <div className="flex h-screen flex-col overflow-hidden bg-[#f3f2f1] font-['Open_Sans','Noto_Sans','Noto_Sans_CJK_SC',sans-serif]">
      <TitleBar />
      <Ribbon />
      <div className="flex min-h-0 flex-1">
        <ViewRail />
        <div className="flex min-w-0 flex-1 flex-col">
          <div className="flex min-h-0 flex-1">
            <Canvas />
            <FilterPane />
          </div>
          <PageTabs />
        </div>
        <VisualizationPane />
        <FieldsPane />
      </div>
      <div className="h-[21px] shrink-0 border-t border-[#d2d0ce] pt-1 pl-[3px] text-[12px] leading-4 text-[#484644]">第 1 页(共 1 页)</div>
    </div>
  );
}
